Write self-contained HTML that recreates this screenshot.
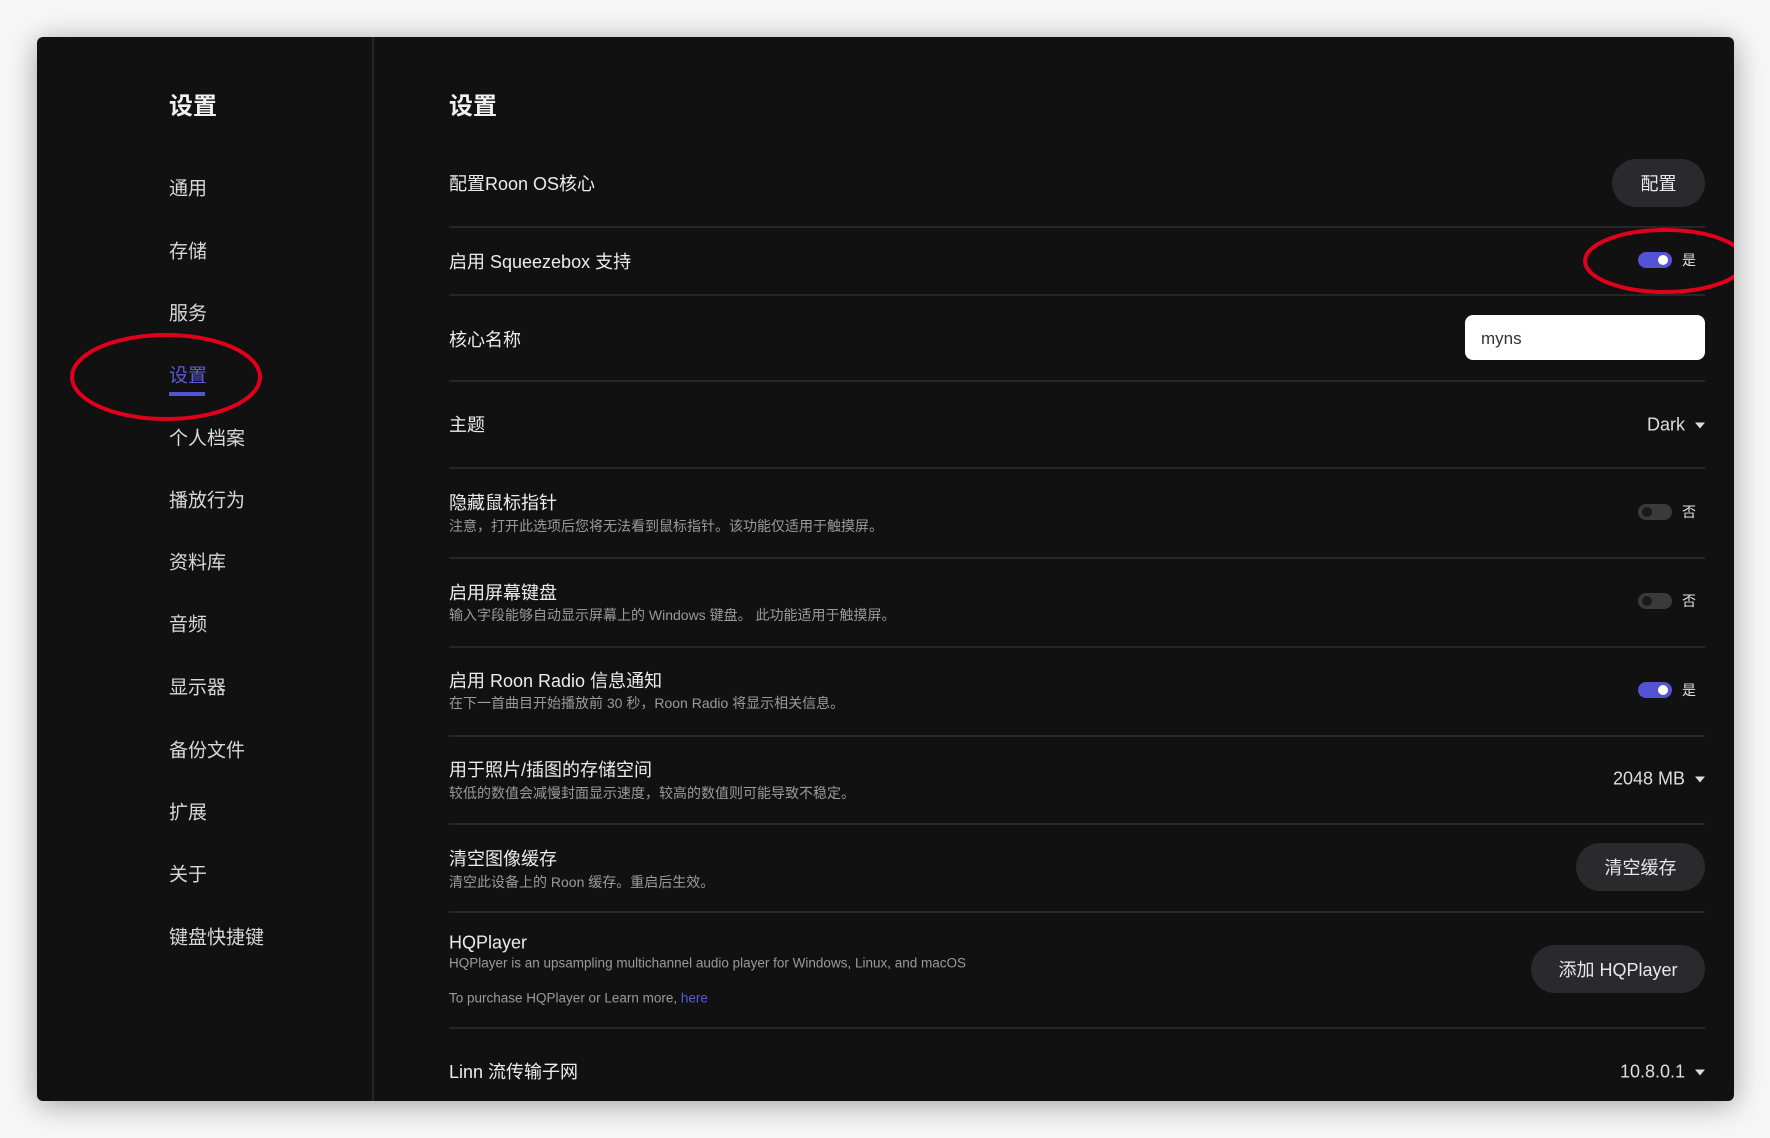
<!DOCTYPE html>
<html><head><meta charset="utf-8"><style>
*{margin:0;padding:0;box-sizing:border-box}
body{width:1770px;height:1138px;background:#f7f7f7;position:relative;overflow:hidden;font-family:"Liberation Sans","Noto Sans CJK SC",sans-serif}
#win{position:absolute;left:37px;top:37px;width:1697px;height:1064px;background:#111;border-radius:6px;box-shadow:0 4px 30px rgba(0,0,0,.35);overflow:hidden}
.a{position:absolute;white-space:nowrap}
.nav{left:132px;font-size:19px;color:#d8d8d8;transform:translateY(-50%)}
.lbl{left:412px;font-size:18px;color:#ececec;transform:translateY(-50%)}
.sub{left:412px;font-size:14px;color:#9a9a9a;transform:translateY(-50%)}
.sep{position:absolute;left:412px;width:1256px;height:2px;background:#262626}
.btn{position:absolute;background:#2a2a2c;color:#e8e8e8;border-radius:26px;font-size:18px;display:flex;align-items:center;justify-content:center}
.tg{position:absolute;left:1601px;width:34px;height:16px;border-radius:8px}
.tg.on{background:#5353d3}.tg.off{background:#3a3a3a}
.tg::after{content:"";position:absolute;top:3px;width:10px;height:10px;border-radius:50%}
.tg.on::after{right:4px;background:#fff}.tg.off::after{left:4px;background:#1a1a1a}
.tl{position:absolute;left:1645px;font-size:14px;color:#e0e0e0;transform:translateY(-50%)}
.dd{right:29px;font-size:18px;color:#dedede;transform:translateY(-50%)}
.dd::after{content:"";display:inline-block;margin-left:10px;border-left:5px solid transparent;border-right:5px solid transparent;border-top:6px solid #ddd;vertical-align:middle}
</style></head><body>
<div id="win">
<div style="position:absolute;left:335px;top:0;width:2px;height:1064px;background:#262626"></div>
<div class="a" style="left:132px;top:49px;font-size:24px;font-weight:bold;color:#f2f2f2">设置</div>
<div class="a nav" style="top:150px">通用</div>
<div class="a nav" style="top:213px">存储</div>
<div class="a nav" style="top:275px">服务</div>
<div class="a nav" style="top:337px;color:#5b5bd6">设置</div>
<div class="a" style="left:132px;top:355px;width:36px;height:4px;background:#5353d3"></div>
<div class="a nav" style="top:400px">个人档案</div>
<div class="a nav" style="top:462px">播放行为</div>
<div class="a nav" style="top:524px">资料库</div>
<div class="a nav" style="top:586px">音频</div>
<div class="a nav" style="top:649px">显示器</div>
<div class="a nav" style="top:712px">备份文件</div>
<div class="a nav" style="top:774px">扩展</div>
<div class="a nav" style="top:836px">关于</div>
<div class="a nav" style="top:899px">键盘快捷键</div>

<div class="a" style="left:412px;top:49px;font-size:24px;font-weight:bold;color:#f2f2f2">设置</div>

<div class="a lbl" style="top:146px">配置Roon OS核心</div>
<div class="btn" style="left:1575px;top:122px;width:93px;height:48px">配置</div>
<div class="sep" style="top:189px"></div>

<div class="a lbl" style="top:224px">启用 Squeezebox 支持</div>
<div class="tg on" style="top:215px"></div><div class="tl" style="top:223px">是</div>
<div class="sep" style="top:257px"></div>

<div class="a lbl" style="top:302px">核心名称</div>
<div style="position:absolute;left:1428px;top:278px;width:240px;height:45px;background:#fff;border-radius:8px;font-size:17px;color:#333;padding:14px 16px 0">myns</div>
<div class="sep" style="top:343px"></div>

<div class="a lbl" style="top:387px">主题</div>
<div class="a dd" style="top:388px">Dark</div>
<div class="sep" style="top:430px"></div>

<div class="a lbl" style="top:465px">隐藏鼠标指针</div>
<div class="a sub" style="top:489px">注意，打开此选项后您将无法看到鼠标指针。该功能仅适用于触摸屏。</div>
<div class="tg off" style="top:467px"></div><div class="tl" style="top:475px">否</div>
<div class="sep" style="top:520px"></div>

<div class="a lbl" style="top:555px">启用屏幕键盘</div>
<div class="a sub" style="top:578px">输入字段能够自动显示屏幕上的 Windows 键盘。 此功能适用于触摸屏。</div>
<div class="tg off" style="top:556px"></div><div class="tl" style="top:564px">否</div>
<div class="sep" style="top:609px"></div>

<div class="a lbl" style="top:643px">启用 Roon Radio 信息通知</div>
<div class="a sub" style="top:666px">在下一首曲目开始播放前 30 秒，Roon Radio 将显示相关信息。</div>
<div class="tg on" style="top:645px"></div><div class="tl" style="top:653px">是</div>
<div class="sep" style="top:698px"></div>

<div class="a lbl" style="top:732px">用于照片/插图的存储空间</div>
<div class="a sub" style="top:756px">较低的数值会减慢封面显示速度，较高的数值则可能导致不稳定。</div>
<div class="a dd" style="top:742px">2048 MB</div>
<div class="sep" style="top:786px"></div>

<div class="a lbl" style="top:821px">清空图像缓存</div>
<div class="a sub" style="top:845px">清空此设备上的 Roon 缓存。重启后生效。</div>
<div class="btn" style="left:1539px;top:806px;width:129px;height:48px">清空缓存</div>
<div class="sep" style="top:874px"></div>

<div class="a lbl" style="top:906px">HQPlayer</div>
<div class="a sub" style="top:926px;font-size:13.5px">HQPlayer is an upsampling multichannel audio player for Windows, Linux, and macOS</div>
<div class="a sub" style="top:961px;font-size:13.5px">To purchase HQPlayer or Learn more, <span style="color:#5b5bd6">here</span></div>
<div class="btn" style="left:1494px;top:908px;width:174px;height:48px">添加 HQPlayer</div>
<div class="sep" style="top:990px"></div>

<div class="a lbl" style="top:1034px">Linn 流传输子网</div>
<div class="a dd" style="top:1035px">10.8.0.1</div>

<svg style="position:absolute;left:0;top:0" width="1697" height="1064">
<ellipse cx="129" cy="340" rx="94" ry="42" fill="none" stroke="#e0001b" stroke-width="4"/>
<ellipse cx="1628" cy="224" rx="80" ry="31" fill="none" stroke="#e0001b" stroke-width="4"/>
</svg>
</div>
</body></html>
